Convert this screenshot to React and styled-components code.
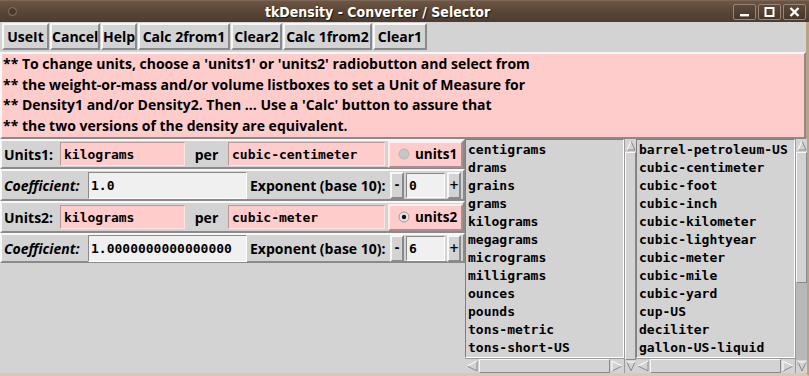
import React from 'react';
import styled, { createGlobalStyle, css } from 'styled-components';

const GlobalStyle = createGlobalStyle`
  html, body { margin: 0; padding: 0; background: #d3d3d3; }
  body { width: 809px; height: 376px; overflow: hidden; }
  * { box-sizing: border-box; }
`;

const COMIC = `"Open Sans", "DejaVu Sans", sans-serif`;
const MONO = `"DejaVu Sans Mono", "Liberation Mono", monospace`;
const LIGHT = '#f7f7f7';
const DARK = '#8a8a8a';

const raised = css`
  border-style: solid;
  border-width: 2px;
  border-color: ${LIGHT} ${DARK} ${DARK} ${LIGHT};
`;
const sunken = css`
  border-style: solid;
  border-width: 1px;
  border-color: ${DARK} ${LIGHT} ${LIGHT} ${DARK};
`;

const Window = styled.div`
  width: 809px;
  height: 376px;
  display: flex;
  flex-direction: column;
  background: #d3d3d3;
  font-family: ${COMIC};
  color: #000;
`;

const TitleBar = styled.div`
  height: 22px;
  flex: none;
  display: flex;
  align-items: center;
  background: linear-gradient(#6c5645 0%, #5a4636 50%, #4d3c2f 100%);
  border-top: 1px solid #7d6754;
`;

const TitleIcon = styled.div`
  width: 22px;
  display: flex;
  justify-content: center;
  padding-left: 2px;
  span {
    width: 9px;
    height: 9px;
    border-radius: 50%;
    background: #4a3a2d;
    border: 1px solid #8a7563;
  }
`;

const TitleText = styled.div`
  flex: 1;
  text-align: center;
  color: #ffffff;
  font-family: "DejaVu Sans Condensed", "DejaVu Sans", sans-serif;
  font-stretch: condensed;
  font-weight: bold;
  font-size: 14px;
  text-shadow: 1px 1px 1px #1e1510;
`;

const WinButtons = styled.div`
  display: flex;
  gap: 2px;
  padding-right: 3px;
  padding-top: 1px;
`;

const WinButton = styled.div`
  width: 23px;
  height: 16px;
  border: 1px solid #9a8676;
  border-radius: 2px;
  background: linear-gradient(#5d4a3b, #47372b);
  display: flex;
  align-items: center;
  justify-content: center;
`;

const Body = styled.div`
  flex: 1;
  display: flex;
  flex-direction: column;
  border-right: 3px solid #b8a387;
  border-bottom: 3px solid #d9c9b0;
  min-height: 0;
`;

const ButtonBar = styled.div`
  height: 30px;
  flex: none;
  display: flex;
  gap: 1px;
  padding: 1px 0 0 2px;
`;

const Button = styled.button`
  ${raised};
  width: ${p => p.$w}px;
  height: 27px;
  padding: 0;
  margin: 0;
  background: #d3d3d3;
  font-family: ${COMIC};
  font-weight: 700;
  font-size: 14px;
  color: #000;
  white-space: nowrap;
`;

const Info = styled.div`
  ${raised};
  height: 87px;
  flex: none;
  background: #ffcccc;
  padding: 0 0 0 1px;
  font-weight: 700;
  font-size: 14px;
  line-height: 20.7px;
  white-space: pre;
`;

const Main = styled.div`
  flex: 1;
  display: flex;
  min-height: 0;
`;

const LeftPanel = styled.div`
  width: 465px;
  flex: none;
  display: flex;
  flex-direction: column;
`;

const Row = styled.div`
  ${raised};
  height: ${p => p.$h}px;
  display: flex;
  align-items: center;
`;

const Label = styled.div`
  width: ${p => p.$w}px;
  flex: none;
  padding-left: ${p => p.$pl || 0}px;
  text-align: ${p => (p.$center ? 'center' : 'left')};
  font-weight: 700;
  font-size: 14px;
  white-space: nowrap;
  font-style: ${p => (p.$italic ? 'italic' : 'normal')};
`;

const Entry = styled.div`
  width: ${p => p.$w}px;
  height: ${p => p.$h || 24}px;
  flex: none;
  border-style: solid;
  border-width: 1px;
  border-color: ${p => (p.$pink ? '#b89898 #ffe4e4 #ffe4e4 #b89898' : `${DARK} #ffffff #ffffff ${DARK}`)};
  background: ${p => (p.$pink ? '#ffcccc' : '#f0f0f0')};
  font-family: ${MONO};
  font-weight: bold;
  font-size: 13px;
  display: flex;
  align-items: center;
  padding-left: ${p => (p.$pink ? 3 : 2)}px;
  white-space: nowrap;
  overflow: hidden;
`;

const Gap = styled.div`
  width: ${p => p.$w}px;
  flex: none;
`;

const RadioFrame = styled.div`
  ${raised};
  border-color: #ffeeee #a58f8f #a58f8f #ffeeee;
  width: 75px;
  height: 27px;
  flex: none;
  background: #ffcccc;
  display: flex;
  align-items: center;
  gap: 5px;
  padding-left: 8px;
  font-weight: 700;
  font-size: 13.5px;
  white-space: nowrap;
  overflow: hidden;
`;

const SpinButton = styled.div`
  ${raised};
  width: 14px;
  height: 27px;
  flex: none;
  display: flex;
  align-items: center;
  justify-content: center;
  font-family: "DejaVu Sans", sans-serif;
  font-weight: bold;
  font-size: 12px;
  background: #d3d3d3;
`;

const ListGroup = styled.div`
  width: 171px;
  flex: none;
  display: grid;
  grid-template-columns: 159px 12px;
  grid-template-rows: 1fr 15px;
`;

const ListBox = styled.div`
  ${sunken};
  border-color: #7f7f7f #ffffff #ffffff #7f7f7f;
  background: #d3d3d3;
  padding: 1px 0 0 2px;
  overflow: hidden;
  font-family: ${MONO};
  font-weight: bold;
  font-size: 13px;
  line-height: 18px;
  white-space: nowrap;
`;

const VScroll = styled.div`
  grid-row: 1 / 3;
  grid-column: 2;
  display: flex;
  flex-direction: column;
  background: #b8b8b8;
  border-left: 1px solid #9a9a9a;
`;

const HScroll = styled.div`
  display: flex;
  background: #b8b8b8;
  border-top: 1px solid #9a9a9a;
`;

const Slider = styled.div`
  ${raised};
  border-width: 1px;
  background: #d3d3d3;
  ${p => (p.$vertical ? css`height: ${p.$len}px;` : '')}
  flex: ${p => (p.$fill ? 1 : 'none')};
`;

const Trough = styled.div`
  flex: 1;
`;

const ArrowBox = styled.div`
  width: ${p => (p.$vertical ? 11 : 14)}px;
  height: ${p => (p.$vertical ? 13 : 14)}px;
  flex: none;
  display: flex;
  align-items: center;
  justify-content: center;
  background: #d3d3d3;
`;

const Arrow = ({ dir, vertical }) => {
  const pts = {
    up: { light: '1,10 5,1', dark: '5,1 9,10 1,10' },
    down: { light: '1,1 9,1', dark: '9,1 5,10 1,1' },
    left: { light: '11,1 1,6 ', dark: '1,6 11,11 11,1' },
    right: { light: '1,11 1,1 11,6', dark: '11,6 1,11' },
  }[dir];
  const w = dir === 'up' || dir === 'down' ? 10 : 12;
  const h = dir === 'up' || dir === 'down' ? 11 : 12;
  return (
    <ArrowBox $vertical={vertical}>
      <svg width={w} height={h} viewBox={`0 0 ${w} ${h}`}>
        <polyline points={pts.dark} fill="none" stroke="#8a8a8a" strokeWidth="1" />
        <polyline points={pts.light} fill="none" stroke="#ffffff" strokeWidth="1" />
      </svg>
    </ArrowBox>
  );
};

const Radio = ({ on }) => (
  <svg width="12" height="12" viewBox="0 0 12 12" style={{ flex: 'none' }}>
    <circle cx="6" cy="6" r="5" fill={on ? '#e4e4e4' : '#c6c6c6'} stroke={on ? '#9a9a9a' : '#b4b4b4'} strokeWidth="1" />
    {on && <circle cx="6" cy="6" r="2.2" fill="#111" />}
  </svg>
);

const UnitsRow = ({ n, mass, vol, on, h }) => (
  <Row $h={h}>
    <Label $w={58} $pl={2}>Units{n}:</Label>
    <Entry $w={125} $pink>{mass}</Entry>
    <Label $w={43} $center>per</Label>
    <Entry $w={157} $pink>{vol}</Entry>
    <Gap $w={3} />
    <RadioFrame>
      <Radio on={on} />
      <span>units{n}</span>
    </RadioFrame>
  </Row>
);

const CoefRow = ({ coef, exp, h }) => (
  <Row $h={h}>
    <Label $w={86} $pl={2} $italic>Coefficient:</Label>
    <Entry $w={159} $h={27}>{coef}</Entry>
    <Label $w={143} $pl={3}>Exponent (base 10):</Label>
    <SpinButton>-</SpinButton>
    <Gap $w={2} />
    <Entry $w={39} $h={25}>{exp}</Entry>
    <Gap $w={2} />
    <SpinButton>+</SpinButton>
  </Row>
);

const List = ({ items, sliderLen }) => (
  <ListGroup>
    <ListBox>
      {items.map(it => (
        <div key={it}>{it}</div>
      ))}
    </ListBox>
    <VScroll>
      <Arrow dir="up" vertical />
      {sliderLen ? (
        <>
          <Slider $vertical $len={sliderLen} />
          <Trough />
        </>
      ) : (
        <Slider $vertical $fill />
      )}
      <Arrow dir="down" vertical />
    </VScroll>
    <HScroll>
      <Arrow dir="left" />
      <Slider $fill />
      <Arrow dir="right" />
    </HScroll>
  </ListGroup>
);

const massUnits = [
  'centigrams', 'drams', 'grains', 'grams', 'kilograms', 'megagrams',
  'micrograms', 'milligrams', 'ounces', 'pounds', 'tons-metric', 'tons-short-US',
];
const volUnits = [
  'barrel-petroleum-US', 'cubic-centimeter', 'cubic-foot', 'cubic-inch',
  'cubic-kilometer', 'cubic-lightyear', 'cubic-meter', 'cubic-mile',
  'cubic-yard', 'cup-US', 'deciliter', 'gallon-US-liquid',
];

const buttons = [
  ['UseIt', 47], ['Cancel', 50], ['Help', 36], ['Calc 2from1', 92],
  ['Clear2', 51], ['Calc 1from2', 89], ['Clear1', 54],
];

const infoText = [
  "** To change units, choose a 'units1' or 'units2' radiobutton and select from",
  '** the weight-or-mass and/or volume listboxes to set a Unit of Measure for',
  "** Density1 and/or Density2. Then ... Use a 'Calc' button to assure that",
  '** the two versions of the density are equivalent.',
].join('\n');

export default function App() {
  return (
    <>
      <GlobalStyle />
      <Window>
        <TitleBar>
          <TitleIcon><span /></TitleIcon>
          <TitleText>tkDensity - Converter / Selector</TitleText>
          <WinButtons>
            <WinButton>
              <svg width="11" height="9" viewBox="0 0 11 9"><rect x="1" y="6" width="9" height="2.4" fill="#fff" /></svg>
            </WinButton>
            <WinButton>
              <svg width="11" height="10" viewBox="0 0 11 10"><rect x="1.5" y="1" width="8" height="8" fill="none" stroke="#fff" strokeWidth="2" /></svg>
            </WinButton>
            <WinButton>
              <svg width="11" height="10" viewBox="0 0 11 10"><path d="M1.5 1 L9.5 9 M9.5 1 L1.5 9" stroke="#fff" strokeWidth="2.4" /></svg>
            </WinButton>
          </WinButtons>
        </TitleBar>
        <Body>
          <ButtonBar>
            {buttons.map(([t, w]) => (
              <Button key={t} $w={w}>{t}</Button>
            ))}
          </ButtonBar>
          <Info>{infoText}</Info>
          <Main>
            <LeftPanel>
              <UnitsRow n={1} mass="kilograms" vol="cubic-centimeter" h={30} />
              <CoefRow coef="1.0" exp="0" h={32} />
              <UnitsRow n={2} mass="kilograms" vol="cubic-meter" on h={32} />
              <CoefRow coef="1.0000000000000000" exp="6" h={30} />
            </LeftPanel>
            <List items={massUnits} />
            <List items={volUnits} sliderLen={131} />
          </Main>
        </Body>
      </Window>
    </>
  );
}
